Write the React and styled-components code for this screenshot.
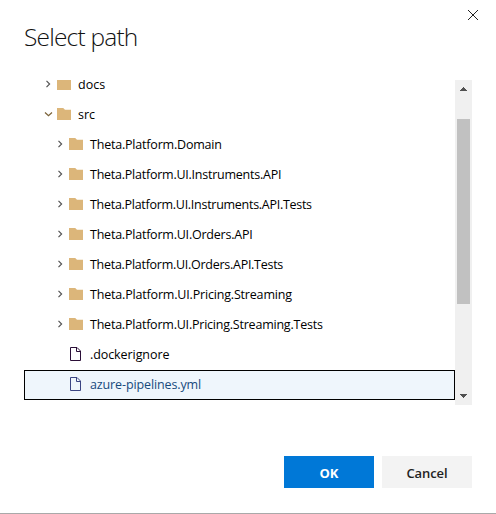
import React from 'react';
import styled, { createGlobalStyle } from 'styled-components';

const GlobalStyle = createGlobalStyle`
  * { box-sizing: border-box; }
  body { margin: 0; background: #fff; overflow: hidden; }
`;

const Dialog = styled.main`
  display: flex;
  flex-direction: column;
  width: 496px;
  height: 514px;
  padding: 0 24px;
  border-bottom: 1px solid #a9a9a9;
  background: #fff;
  color: #000;
  font-family: 'Open Sans', 'Noto Sans', sans-serif;
`;

const Header = styled.header`
  display: flex;
  justify-content: space-between;
  align-items: flex-start;
  height: 80px;
`;

const Title = styled.h1`
  margin: 20px 0 0;
  font-size: 24.5px;
  font-weight: 300;
  line-height: 34px;
  letter-spacing: -0.8px;
  color: #111;
  white-space: nowrap;
`;

const CloseButton = styled.button`
  display: flex;
  margin: 9px -7px 0 0;
  padding: 0;
  border: 0;
  background: none;
`;

const TreePane = styled.section`
  display: flex;
  height: 325px;
  overflow: hidden;
`;

const Tree = styled.ul`
  flex: 1;
  min-width: 0;
  margin: -10px 0 0;
  padding: 0;
  list-style: none;
`;

const Row = styled.li`
  display: flex;
  align-items: center;
  height: 30px;
  padding-left: ${(p) => 19 + p.$level * 12}px;
  border: 1px solid ${(p) => (p.$selected ? '#000' : 'transparent')};
  background: ${(p) => (p.$selected ? '#eff6fc' : 'transparent')};
  color: ${(p) => (p.$selected ? '#174a7c' : '#000')};
`;

const Slot = styled.span`
  display: flex;
  flex: none;
  width: ${(p) => p.$width}px;
  padding-bottom: 2px;
`;

const Label = styled.span`
  font-size: 12.5px;
  line-height: 18px;
  letter-spacing: ${(p) => p.$tracking || 0}px;
  white-space: nowrap;
`;

const Scrollbar = styled.div`
  display: flex;
  flex-direction: column;
  align-items: center;
  width: 17px;
  background: #f0f0f0;
`;

const ScrollArrow = styled.div`
  display: flex;
  align-items: flex-start;
  height: 17px;
  padding-top: ${(p) => (p.$down ? 6 : 7)}px;
`;

const Track = styled.div`
  flex: 1;
  padding-top: 22px;
`;

const Thumb = styled.div`
  width: 13px;
  height: 185px;
  background: #c1c1c1;
`;

const Footer = styled.footer`
  display: flex;
  justify-content: flex-end;
  gap: 8px;
  margin-top: 51px;
`;

const Button = styled.button`
  width: 90px;
  height: 32px;
  padding: 2px 0 0;
  border: 0;
  background: ${(p) => (p.$primary ? '#0078d7' : '#f3f3f3')};
  color: ${(p) => (p.$primary ? '#fff' : '#222')};
  font: 600 13px/18px 'Open Sans', 'Noto Sans', sans-serif;
  font-weight: ${(p) => (p.$primary ? 700 : 600)};
  letter-spacing: ${(p) => (p.$primary ? 0 : -0.1)}px;
`;

const Chevron = ({ open }) => (
  <svg width="10" height="10" viewBox="0 0 10 10" fill="none" stroke={open ? '#7a6238' : '#555'} strokeWidth="1.2">
    <path d={open ? 'M1 3.5 L4.5 6.8 L8 3.5' : 'M2.5 1.9 L5.6 5 L2.5 8.1'} />
  </svg>
);

const Folder = () => (
  <svg width="14" height="12" viewBox="0 0 14 12" fill="#dcb67a">
    <path d="M0 0H6.2L8 1.8H14V12H0Z" />
  </svg>
);

const FileIcon = ({ selected }) => (
  <svg width="14" height="14" viewBox="0 0 14 14" fill="none" stroke={selected ? '#3b4583' : '#2b0f38'} strokeWidth="1">
    <path d="M1.5 0.5H8L11.5 4V13.5H1.5Z M7.5 0.5V4.5H11.5" />
  </svg>
);

const items = [
  { name: 'docs', level: 0 },
  { name: 'src', level: 0, open: true },
  { name: 'Theta.Platform.Domain', level: 1, tracking: -0.2 },
  { name: 'Theta.Platform.UI.Instruments.API', level: 1, tracking: -0.24 },
  { name: 'Theta.Platform.UI.Instruments.API.Tests', level: 1, tracking: -0.28 },
  { name: 'Theta.Platform.UI.Orders.API', level: 1, tracking: -0.22 },
  { name: 'Theta.Platform.UI.Orders.API.Tests', level: 1, tracking: -0.27 },
  { name: 'Theta.Platform.UI.Pricing.Streaming', level: 1, tracking: -0.18 },
  { name: 'Theta.Platform.UI.Pricing.Streaming.Tests', level: 1, tracking: -0.22 },
  { name: '.dockerignore', level: 1, file: true, tracking: -0.08 },
  { name: 'azure-pipelines.yml', level: 1, file: true, selected: true, tracking: -0.12 },
];

export default function App() {
  return (
    <>
      <GlobalStyle />
      <Dialog>
        <Header>
          <Title>Select path</Title>
          <CloseButton aria-label="Close">
            <svg width="12" height="12" viewBox="0 0 12 12" stroke="#222" strokeWidth="1">
              <path d="M1 1L11 11M11 1L1 11" />
            </svg>
          </CloseButton>
        </Header>
        <TreePane>
          <Tree>
            {items.map((item) => (
              <Row key={item.name} $level={item.level} $selected={item.selected}>
                <Slot $width={13}>{!item.file && <Chevron open={item.open} />}</Slot>
                <Slot $width={21}>
                  {item.file ? <FileIcon selected={item.selected} /> : <Folder />}
                </Slot>
                <Label $tracking={item.tracking}>{item.name}</Label>
              </Row>
            ))}
          </Tree>
          <Scrollbar>
            <ScrollArrow>
              <svg width="7" height="4" viewBox="0 0 7 4" fill="#505050"><path d="M3 0H4V1H5V2H6V3H7V4H0V3H1V2H2V1H3Z" /></svg>
            </ScrollArrow>
            <Track><Thumb /></Track>
            <ScrollArrow $down>
              <svg width="7" height="4" viewBox="0 0 7 4" fill="#505050"><path d="M0 0H7V1H6V2H5V3H4V4H3V3H2V2H1V1H0Z" /></svg>
            </ScrollArrow>
          </Scrollbar>
        </TreePane>
        <Footer>
          <Button $primary>OK</Button>
          <Button>Cancel</Button>
        </Footer>
      </Dialog>
    </>
  );
}
